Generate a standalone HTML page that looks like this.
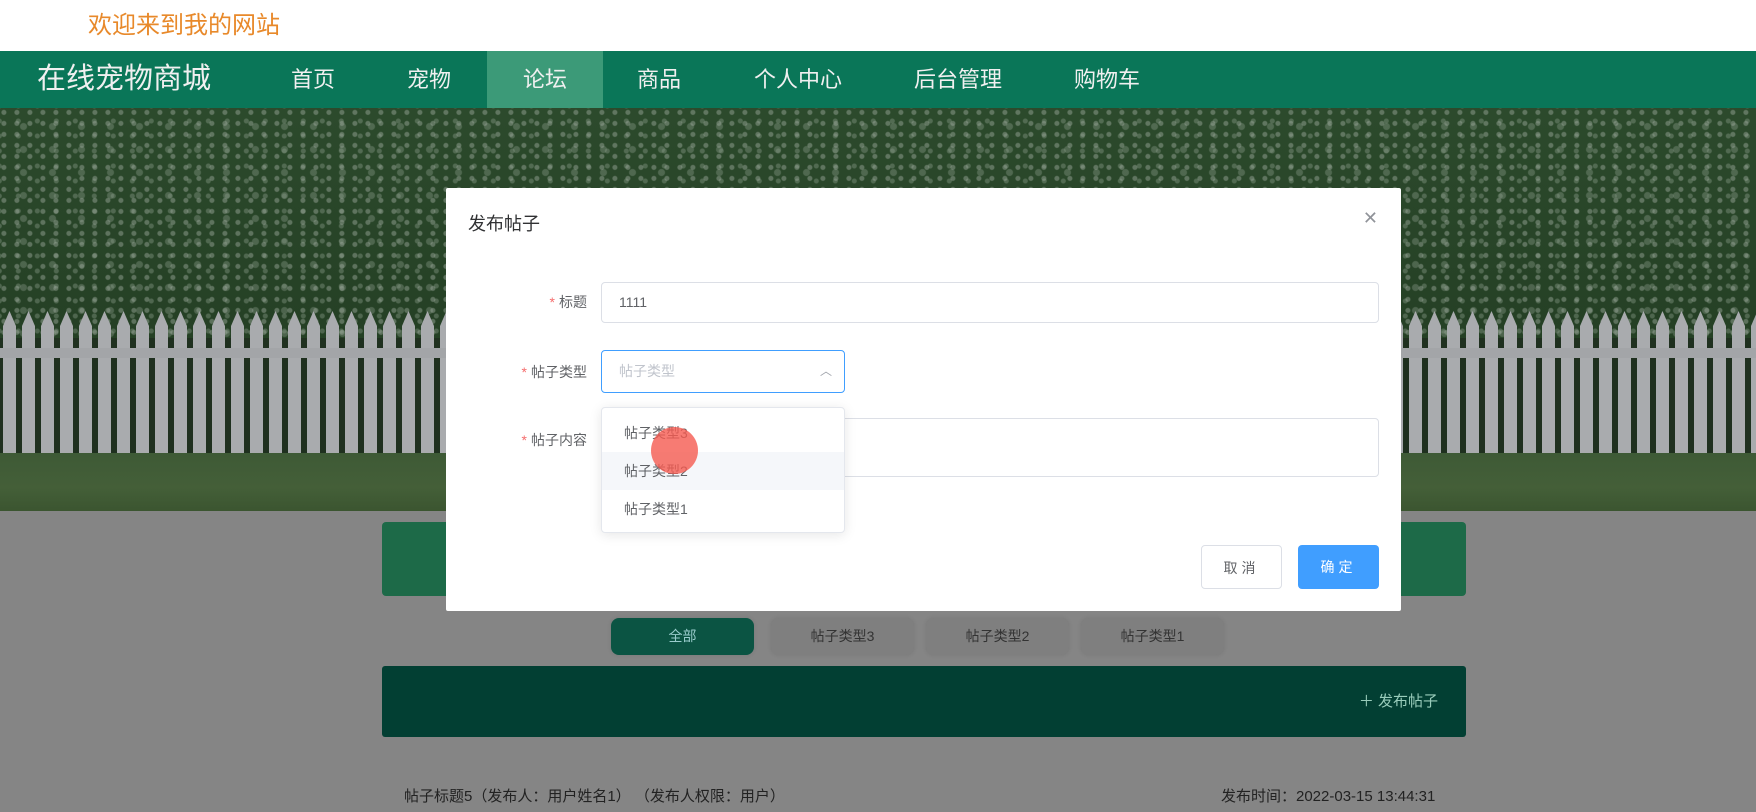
<!DOCTYPE html>
<html><head><meta charset="utf-8"><style>
*{margin:0;padding:0;box-sizing:border-box}
body{width:1756px;height:812px;overflow:hidden;background:#858585;font-family:"Liberation Sans","Noto Sans CJK SC",sans-serif;position:relative}
.top{position:absolute;left:0;top:0;width:1756px;height:51px;background:#fff}
.top span{position:absolute;left:88px;top:5px;font-size:24px;color:#e8892a}
.nav{position:absolute;left:0;top:51px;width:1756px;height:57px;background:#0a7658}
.nav div{position:absolute;top:0;height:57px;line-height:57px;color:#f0f0f0;font-size:22px}
.nav .logo{left:37px;font-size:29px}
.nav .act{background:#3c9a78;width:116px;text-align:center;left:487px}
.hero{position:absolute;left:0;top:108px;width:1756px;height:403px;overflow:hidden;
background:
radial-gradient(circle at 30% 40%,rgba(160,172,160,.45) 0 2px,transparent 3px) 0 0/13px 11px,
radial-gradient(circle at 70% 60%,rgba(140,158,140,.4) 0 2px,transparent 3px) 5px 4px/19px 15px,
radial-gradient(circle at 50% 50%,rgba(150,165,150,.35) 0 3px,transparent 4px) 9px 7px/29px 23px,
linear-gradient(#2c4a2c,#243f24 60%,#1d331d);}
.grass{position:absolute;left:0;top:345px;width:1756px;height:58px;background:linear-gradient(#3e5a36,#445f38 60%,#3b5530)}
.gbox{position:absolute;left:382px;top:522px;width:1084px;height:74px;background:#1d6a48;border-radius:4px}
.tab{position:absolute;top:618px;height:37px;width:143px;border-radius:8px;background:#7f7f7f;color:#333;font-size:14px;text-align:center;line-height:37px;box-shadow:0 0 4px rgba(0,0,0,.1)}
.bar{position:absolute;left:382px;top:666px;width:1084px;height:71px;background:#023f33;border-radius:3px;color:#9cb;font-size:15px}
.bar span{position:absolute;right:28px;top:24px}
.bot{position:absolute;top:785px;font-size:15px;color:#222}
.dlg{position:absolute;left:446px;top:188px;width:955px;height:423px;background:#fff;border-radius:2px}
.dlg .t{position:absolute;left:22px;top:22px;font-size:18px;color:#303133}
.dlg .x{position:absolute;right:23px;top:20px;font-size:18px;color:#909399}
.lbl{position:absolute;font-size:14px;color:#606266;right:814px;text-align:right}
.lbl i{color:#f56c6c;font-style:normal;margin-right:4px}
.inp{position:absolute;border:1px solid #dcdfe6;border-radius:4px;background:#fff;font-size:14px;color:#606266}
.dd{position:absolute;left:155px;top:219px;width:244px;height:126px;background:#fff;border:1px solid #e4e7ed;box-shadow:0 2px 12px rgba(0,0,0,.1);border-radius:4px}
.dd div{position:absolute;left:0;width:100%;height:38px;line-height:38px;padding-left:22px;font-size:14px;color:#606266}
.btn{position:absolute;top:357px;height:44px;width:81px;border-radius:4px;font-size:14px;text-align:center;line-height:44px;letter-spacing:4px}
</style></head><body>
<div class="top"><span>欢迎来到我的网站</span></div>
<div class="nav">
<div class="logo">在线宠物商城</div>
<div style="left:291px">首页</div>
<div style="left:407px">宠物</div>
<div class="act">论坛</div>
<div style="left:637px">商品</div>
<div style="left:754px">个人中心</div>
<div style="left:914px">后台管理</div>
<div style="left:1074px">购物车</div>
</div>
<div class="hero">
<svg width="1756" height="403" style="position:absolute;left:0;top:0">
<defs><pattern id="p" width="19" height="403" patternUnits="userSpaceOnUse">
<rect x="0" y="230" width="19" height="120" fill="#1f301f"/>
<path d="M3 218 L9.5 203 L16 218 L16 350 L3 350 Z" fill="#a9abae"/>
</pattern></defs>
<rect x="0" y="0" width="1756" height="403" fill="url(#p)"/>
<rect x="0" y="240" width="1756" height="10" fill="#a3a5a8"/>
</svg>
<div class="grass"></div></div>
<div class="gbox"></div>
<div class="tab" style="left:611px;background:#0b5443;color:#9cc">全部</div>
<div class="tab" style="left:771px">帖子类型3</div>
<div class="tab" style="left:926px">帖子类型2</div>
<div class="tab" style="left:1081px">帖子类型1</div>
<div class="bar"><span>＋ 发布帖子</span></div>
<div class="bot" style="left:404px">帖子标题5（发布人：用户姓名1） （发布人权限：用户）</div>
<div class="bot" style="left:1221px">发布时间：2022-03-15 13:44:31</div>
<div class="dlg">
<div class="t">发布帖子</div>
<div class="x">✕</div>
<div class="lbl" style="top:104px"><i>*</i>标题</div>
<div class="inp" style="left:155px;top:94px;width:778px;height:41px;line-height:39px;padding-left:17px">1111</div>
<div class="lbl" style="top:174px"><i>*</i>帖子类型</div>
<div class="inp" style="left:155px;top:162px;width:244px;height:43px;line-height:41px;padding-left:17px;border-color:#409eff;color:#c0c4cc">帖子类型<span style="position:absolute;right:12px;top:0;font-size:12px;color:#a0a4ac">︿</span></div>
<div class="lbl" style="top:242px"><i>*</i>帖子内容</div>
<div class="inp" style="left:155px;top:230px;width:778px;height:59px"></div>
<div class="dd">
<div style="top:6px">帖子类型3</div>
<div style="top:44px;background:#f5f7fa">帖子类型2</div>
<div style="top:82px">帖子类型1</div>
</div>
<div style="position:absolute;left:205px;top:239px;width:47px;height:47px;border-radius:50%;background:rgba(245,90,80,.8)"></div>
<div class="btn" style="left:755px;border:1px solid #dcdfe6;color:#606266">取消</div>
<div class="btn" style="left:852px;background:#409eff;color:#fff">确定</div>
</div>
</body></html>
